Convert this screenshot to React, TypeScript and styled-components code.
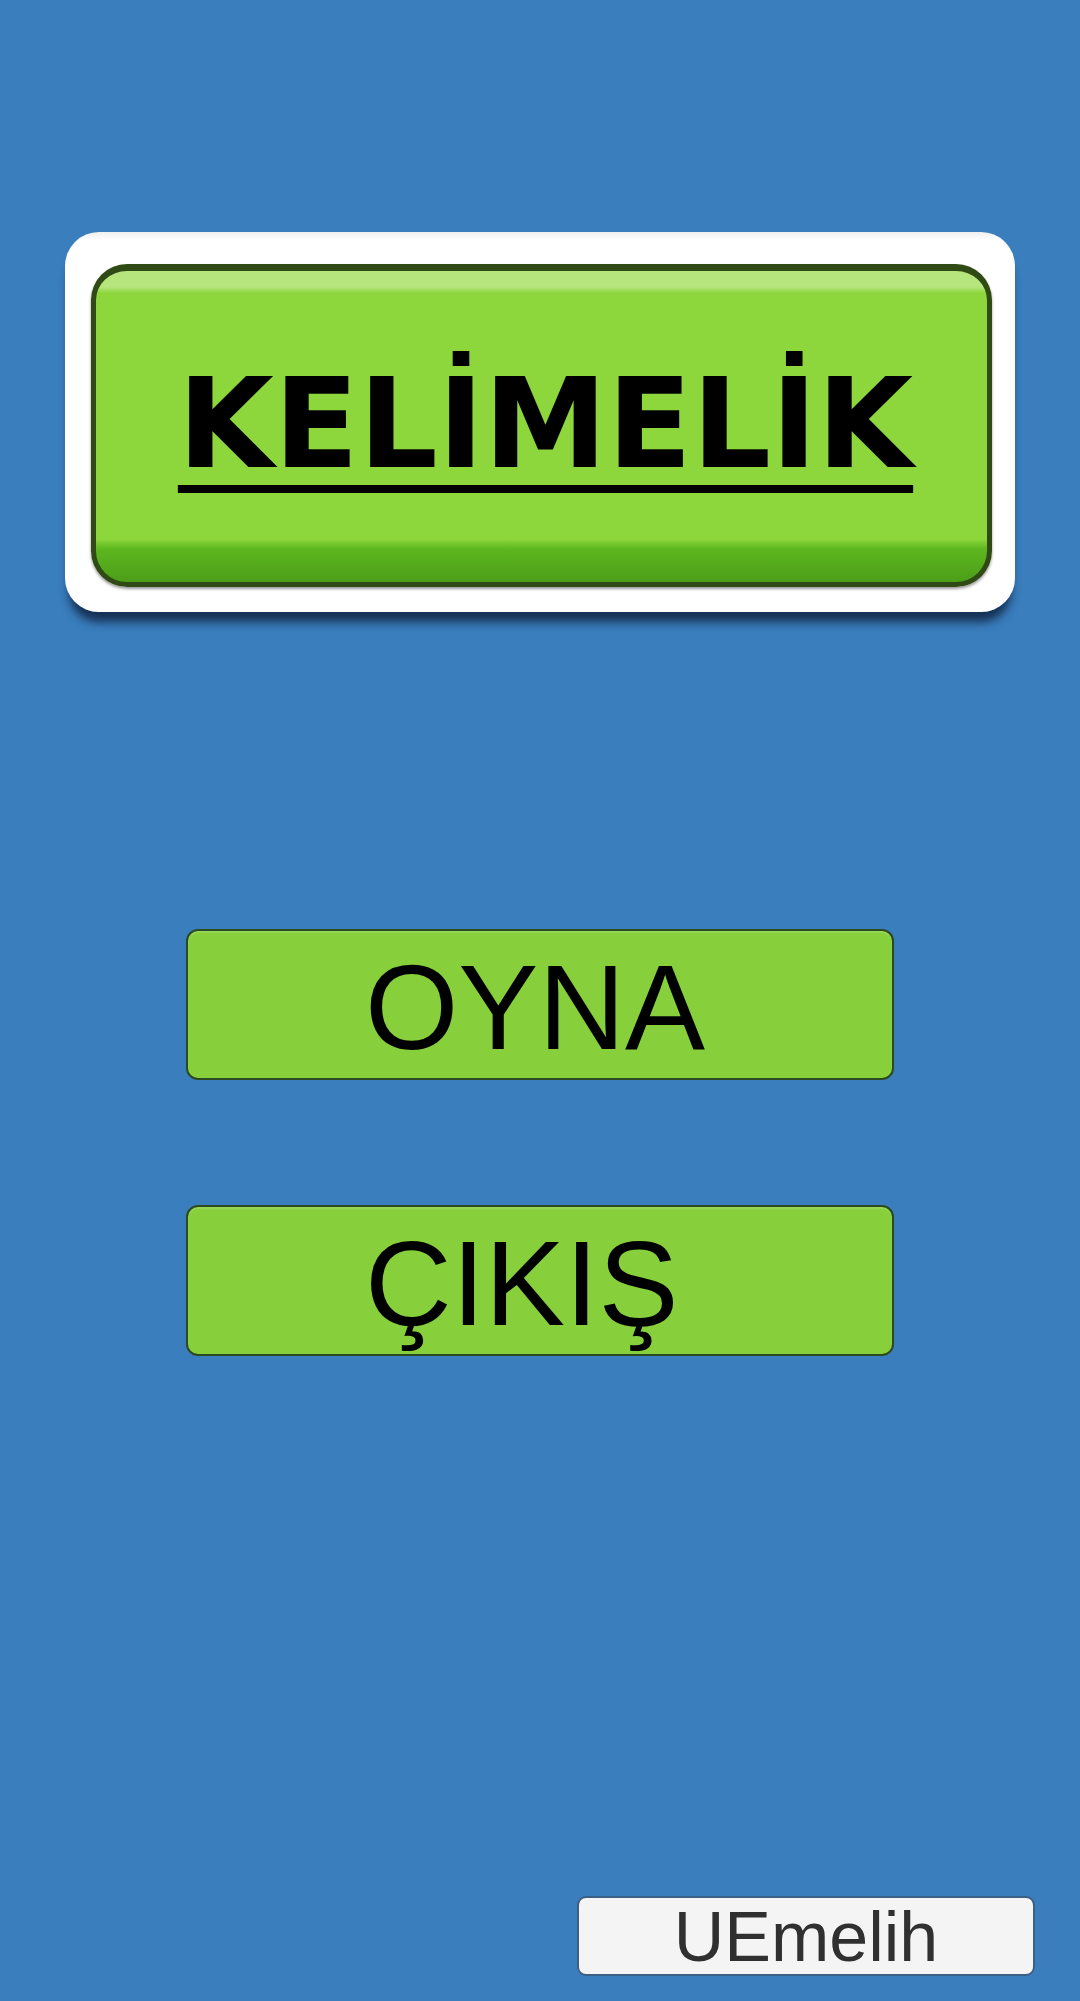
import styled, { createGlobalStyle } from "styled-components";

const GlobalStyle = createGlobalStyle`
  html, body {
    margin: 0;
    padding: 0;
    background: #3a7ebe;
  }
  * {
    box-sizing: border-box;
  }
`;

const Screen = styled.div`
  width: 1080px;
  height: 2001px;
  background: #3a7ebe;
  display: flex;
  flex-direction: column;
  align-items: center;
  padding: 232px 0 25px;
  font-family: "Liberation Sans", Arial, sans-serif;
`;

const TitleFrame = styled.div`
  width: 950px;
  height: 380px;
  padding: 32px 23px 25px 26px;
  background: linear-gradient(to bottom, #eef0ee 0px, #fff 8px, #fff 100%);
  border-radius: 34px;
  box-shadow: 0 14px 10px -4px rgba(15, 35, 65, 0.85);
`;

const TitlePanel = styled.div`
  height: 100%;
  border-radius: 36px;
  border: 5px solid #2f4a14;
  border-top-width: 7px;
  background: linear-gradient(
    to bottom,
    #b5e57c 0px,
    #b5e57c 16px,
    #8dd63c 22px,
    #8dd63c 268px,
    #5db71f 278px,
    #4c9e18 100%
  );
  box-shadow: 0 2px 3px rgba(0, 0, 0, 0.4);
  display: flex;
  align-items: center;
  justify-content: center;
  padding: 0 0 6px 8px;
`;

const Title = styled.h1`
  margin: 0;
  font-family: "DejaVu Sans", "Liberation Sans", sans-serif;
  font-weight: bold;
  font-size: 124px;
  line-height: 1;
  color: #000;
  text-decoration: underline;
  text-decoration-thickness: 8px;
  text-underline-offset: 18px;
`;

const Menu = styled.div`
  margin-top: 317px;
  display: flex;
  flex-direction: column;
  gap: 125px;
`;

const MenuButton = styled.button`
  width: 708px;
  height: 151px;
  border: 2px solid #2c4a22;
  border-radius: 12px;
  background: #87d03b;
  color: #000;
  font-family: "Liberation Sans", Arial, sans-serif;
  font-size: 120px;
  line-height: 1;
  padding: 4px 0 0 177px;
  display: flex;
  align-items: center;
  justify-content: flex-start;
  cursor: pointer;
  box-shadow: inset 0 2px 2px rgba(255, 255, 255, 0.15);
`;

const Footer = styled.div`
  margin-top: auto;
  align-self: flex-end;
  margin-right: 45px;
`;

const Credit = styled.button`
  width: 458px;
  height: 80px;
  border: 2px solid #3c5f86;
  border-radius: 9px;
  background: #f4f4f4;
  color: #303030;
  font-family: "Liberation Sans", Arial, sans-serif;
  font-size: 70px;
  line-height: 1;
  padding: 2px 0 0;
  display: flex;
  align-items: center;
  justify-content: center;
`;

export default function App() {
  return (
    <>
      <GlobalStyle />
      <Screen>
        <TitleFrame>
          <TitlePanel>
            <Title>KELİMELİK</Title>
          </TitlePanel>
        </TitleFrame>
        <Menu>
          <MenuButton>OYNA</MenuButton>
          <MenuButton>ÇIKIŞ</MenuButton>
        </Menu>
        <Footer>
          <Credit>UEmelih</Credit>
        </Footer>
      </Screen>
    </>
  );
}
